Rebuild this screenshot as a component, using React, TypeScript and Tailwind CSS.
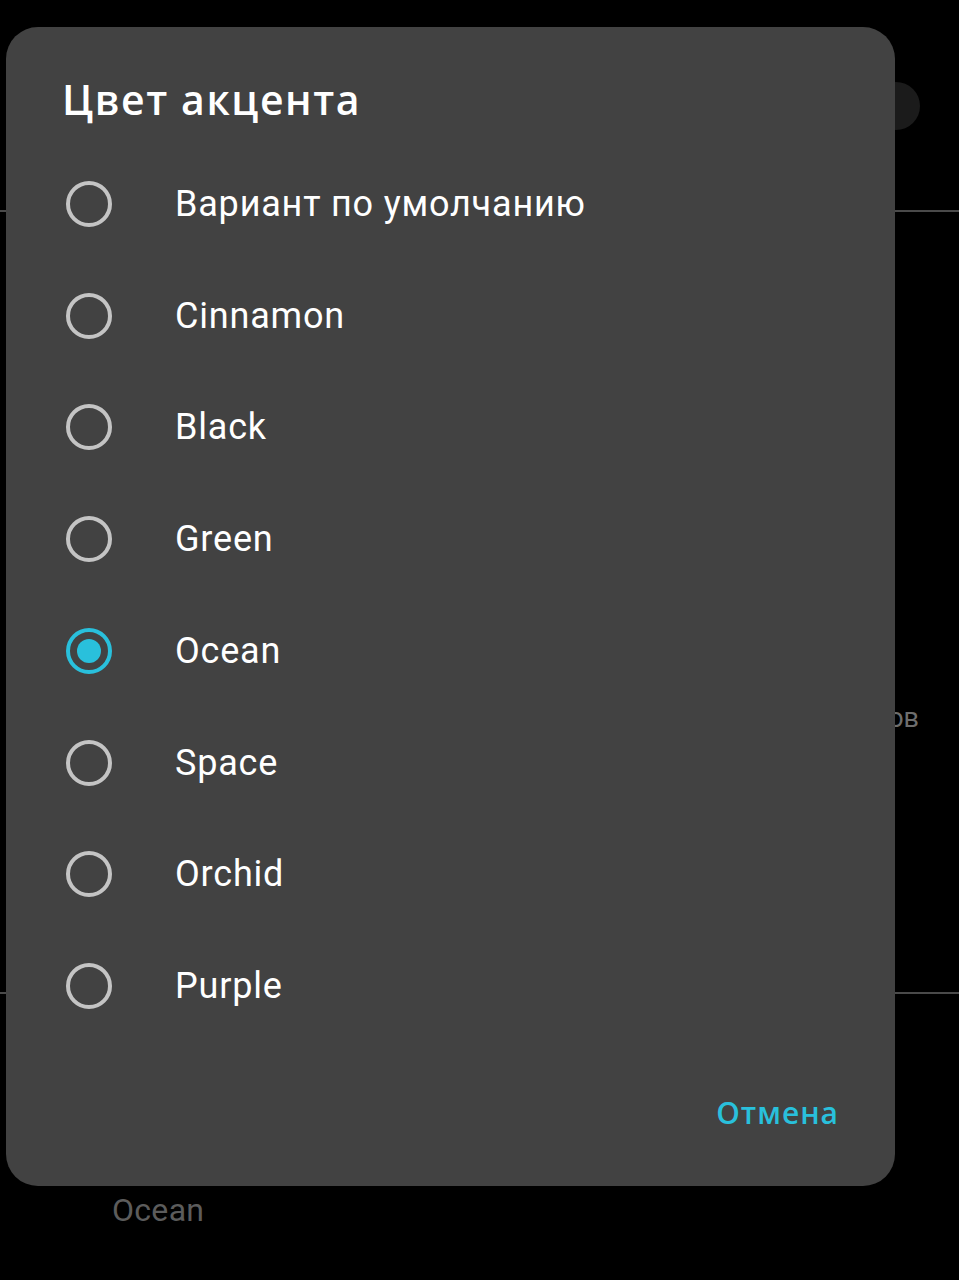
import React from 'react';

const options = ['Вариант по умолчанию', 'Cinnamon', 'Black', 'Green', 'Ocean', 'Space', 'Orchid', 'Purple'];

const Radio = ({ checked }: { checked: boolean }) => (
  <div
    className={
      'w-[46px] h-[46px] rounded-full border-[4px] flex items-center justify-center shrink-0 ' +
      (checked ? 'border-[#29c0dc]' : 'border-[#c4c4c4]')
    }
  >
    {checked && <div className="w-[24px] h-[24px] rounded-full bg-[#29c0dc]" />}
  </div>
);

export default function App() {
  const selected = 'Ocean';

  return (
    <div className="relative w-[959px] h-[1280px] bg-black overflow-hidden" style={{ fontFamily: 'Roboto, "Noto Sans", sans-serif' }}>
      {/* settings page behind the dialog */}
      <div className="flex flex-col">
        <div className="h-[210px] flex justify-end pr-[39px] pt-[82px]">
          <div className="w-[48px] h-[48px] rounded-full bg-[#1b1b1b]" />
        </div>
        <div className="h-[2px] bg-[#4a4a4a]" />
        <div className="h-[780px] flex justify-end pr-[40px] pt-[490px]">
          <span className="text-[27px] text-[#6e6e6e] leading-[32px]">ов</span>
        </div>
        <div className="h-[2px] bg-[#4a4a4a]" />
        <div className="pl-[112px] pt-[196px]">
          <span className="text-[32px] tracking-[0.3px] text-[#5c5c5c] leading-[40px]">Ocean</span>
        </div>
      </div>

      {/* dialog */}
      <div className="absolute left-[6px] top-[27px] w-[889px] h-[1159px] rounded-[32px] bg-[#424242] flex flex-col">
        <div className="pl-[56px] pt-[48px] h-[121px]">
          <h1
            className="text-[41px] leading-[48px] font-semibold tracking-[1.6px] text-white"
            style={{ fontFamily: '"Open Sans", Roboto, sans-serif' }}
          >
            Цвет акцента
          </h1>
        </div>
        <div className="flex flex-col">
          {options.map((o) => (
            <div key={o} className="h-[111.75px] flex items-center pl-[60px]">
              <Radio checked={o === selected} />
              <span className="ml-[63px] text-[36px] tracking-[0.8px] text-white leading-[40px]">{o}</span>
            </div>
          ))}
        </div>
        <div className="flex justify-end pr-[56px] mt-[40px]">
          <button
            className="h-[60px] text-[30px] font-semibold tracking-[1px] text-[#29c0dc]"
            style={{ fontFamily: '"Open Sans", Roboto, sans-serif' }}
          >
            Отмена
          </button>
        </div>
      </div>
    </div>
  );
}
